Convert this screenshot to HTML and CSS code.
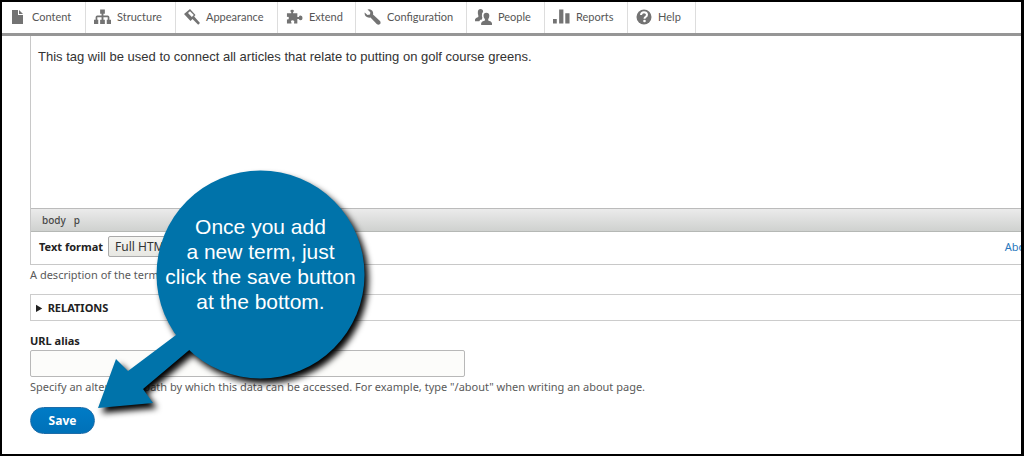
FILE: index.html
```
<!DOCTYPE html>
<html lang="en">
<head>
<meta charset="utf-8">
<title>Add term</title>
<link rel="stylesheet" href="styles.css">
</head>
<body>
<div class="page">
  <nav class="toolbar">
    <a class="tab tab-content" href="#"><svg class="icon" viewBox="0 0 16 16"><path d="M2 1h6v5h5v9H2zM9 1l4 4H9z"/></svg>Content</a>
    <a class="tab tab-structure" href="#"><svg class="icon icon-wide" viewBox="0 0 18 16"><path d="M6.500 0h5v4.500H10v2h4.500q1.800 0 1.800 1.800V11H18v4.500h-4.500V11h1V8.300H10V11h1.500v4.500h-5V11H8V8.300H3.500V11h1v4.500H0V11h1.700V8.300q0-1.800 1.800-1.800H8v-2H6.500z"/></svg>Structure</a>
    <a class="tab tab-appearance" href="#"><svg class="icon" viewBox="0 0 16 16"><path fill-rule="evenodd" d="M0 5 6 0l5.500 6-1.300 1.600 5.800 6.400-1.800 1.800L8.500 10 6.500 12zM6 2.200 4 4l3.800 4 2-2z"/></svg>Appearance</a>
    <a class="tab tab-extend" href="#"><svg class="icon icon-wide" viewBox="0 0 18 16"><path d="M1 4h4.500V3Q4 2 5 .7q1.500-1 3 0Q9 2 7.500 3v1H12v4h1.500q.5-1.500 2-1.500 2 .2 2 2.500t-2 2.500q-1.500 0-2-1.500H12v5H8.500v-1q1-1.500-.5-2.300-1.500-.7-2.500.3-.7.800.3 2v1H1v-4.500q2 .5 2-1.500T1 8z"/></svg>Extend</a>
    <a class="tab tab-config" href="#"><svg class="icon icon-wide" viewBox="0 0 17 16"><path d="M3.500.6q3-1 4.800 1.200Q9.500 3.500 9 5.500l7 6.500q1.300 2-.3 3.300-1.500 1-3-.4L6.500 8.500Q3.800 9 2 7.500.3 6 .7 3.500L3.500 6 6 5.500 6.300 3.200z"/></svg>Configuration</a>
    <a class="tab tab-people" href="#"><svg class="icon icon-wide" viewBox="0 0 18 17"><path d="M5.800 0q2.800 0 2.800 3Q7 4.500 7.300 7.500L7.800 9.500 7 11.500H5.500L4.500 13H0v-2q.5-1.500 3.500-2.500V7Q2.800 5 3 3q.3-3 2.800-3z"/><path d="M12 4q3.200 0 3.200 3.300 0 2-1.200 3.500v1.500q3.500.7 4 2.700v2H6.500v-2q.5-2 4-2.700v-1.500Q9 9.300 9 7.300 9 4 12 4z"/></svg>People</a>
    <a class="tab tab-reports" href="#"><svg class="icon icon-wide" viewBox="0 0 18 16"><path d="M0 10h4v5H0zM6.500 0h4.500v15H6.500zM13 4h4.500v11H13z"/></svg>Reports</a>
    <a class="tab tab-help" href="#"><svg class="icon" viewBox="0 0 16 16"><circle cx="8" cy="8" r="7.500"/><path class="icon-cut" d="M5 6q.3-2.700 3-2.700T11 5.700Q11 7 9.600 7.900 8.500 8.500 8.500 9.800"/><circle class="icon-dot" cx="8.500" cy="12" r="1.300"/></svg>Help</a>
  </nav>
  <main class="content">
    <form class="term-form">
      <section class="editor">
        <div class="editor-body"><p>This tag will be used to connect all articles that relate to putting on golf course greens.</p></div>
        <div class="editor-path"><span>body</span><span>p</span></div>
        <div class="format-row">
          <label class="format-label" for="format">Text format</label>
          <select class="format-select" id="format"><option>Full HTML</option></select>
          <a class="format-help" href="#">About text formats</a>
        </div>
      </section>
      <p class="hint">A description of the term.</p>
      <details class="relations"><summary>RELATIONS</summary></details>
      <label class="alias-label" for="alias">URL alias</label>
      <input class="alias-input" id="alias" type="text">
      <p class="hint">Specify an alternative path by which this data can be accessed. For example, type "/about" when writing an about page.</p>
      <button class="save" type="button">Save</button>
    </form>
  </main>
  <aside class="callout">
    <svg class="callout-shape" viewBox="0 0 290 260"><g><circle cx="170.500" cy="114.500" r="104"/><path d="M8 248 26 199 38 211 90 172 104 186 53 229 63 243z"/></g></svg>
    <p class="callout-text">Once you add<br>a new term, just<br>click the save button<br>at the bottom.</p>
  </aside>
</div>
</body>
</html>
```
FILE: styles.css
```
* { box-sizing: border-box; }
body { margin: 0; font-family: "Noto Sans", "Open Sans", sans-serif; color: #222; background: #fff; }
p { margin: 0; }
.page { position: relative; min-height: 100vh; border: 2px solid #000; border-right-width: 3px; overflow: hidden; background: #fff; }

.toolbar { display: flex; height: 34px; border-bottom: 3px solid #969696; }
.tab { display: flex; align-items: center; gap: 6px; padding: 0 0 1px 8px; border-right: 1px solid #ddd; color: #565656; font: 11px/16px Lato, "Noto Sans", sans-serif; text-decoration: none; white-space: nowrap; }
.tab-content { width: 84px; }
.tab-structure { width: 90px; }
.tab-appearance { width: 102px; }
.tab-extend { width: 78px; }
.tab-config { width: 111px; }
.tab-people { width: 78px; }
.tab-reports { width: 83px; }
.tab-help { width: 68px; }
.icon { flex: none; width: 16px; height: 16px; fill: #737373; }
.icon-wide { width: 17px; }
.icon-cut { fill: none; stroke: #fff; stroke-width: 2; }
.icon-dot { fill: #fff; }

.content { padding-left: 28px; }
.term-form { display: flex; flex-direction: column; align-items: flex-start; }
.editor { align-self: stretch; margin-right: -90px; border: 1px solid #c8c8c8; border-top: 0; }
.editor-body { height: 172px; padding: 12px 8px 12px 7px; font: 13px/18px "Liberation Sans", Arial, sans-serif; color: #333; }
.editor-path { display: flex; gap: 8px; height: 24px; padding: 0 11px; border-top: 1px solid #bbb; border-bottom: 1px solid #b5b8b5; background: linear-gradient(#ebebeb, #cfd1cf); color: #484848; font-size: 10px; line-height: 22px; font-weight: 500; }
.format-row { display: flex; align-items: center; gap: 5px; height: 32px; padding: 0 8px 3px; font-size: 12px; }
.format-label { font-size: 11px; font-weight: 700; }
.format-select { width: 110px; height: 21px; padding: 0 2px; border: 1px solid #aaa; border-radius: 2px; background: linear-gradient(#f5f5f2, #e7e7e2); color: #333; font: 12px/18px "Noto Sans", sans-serif; }
.format-help { margin-left: auto; color: #2878bd; font-size: 11px; text-decoration: none; }
.hint { color: #5a5a5a; font-size: 11px; line-height: 20px; white-space: nowrap; }
.relations { align-self: stretch; margin: 9px -20px 11px 0; border: 1px solid #ccc; }
.relations summary { padding: 0 5px; font-size: 11px; line-height: 25px; font-weight: 700; }
.alias-label { font-size: 11px; line-height: 18px; font-weight: 700; }
.alias-input { width: 435px; height: 27px; padding: 0 8px; border: 1px solid #b8b8b8; border-radius: 2px; background: #fcfcfa; font: inherit; }
.save { width: 65px; height: 27px; margin-top: 10px; padding: 0; border: 1px solid #1e6ca8; border-radius: 14px; background: linear-gradient(#007bc6, #0071b8); color: #fff; font: 700 12px/20px "Noto Sans", sans-serif; }

.callout { position: absolute; left: 88px; top: 158px; width: 290px; height: 260px; }
.callout-shape { display: block; width: 290px; height: 260px; fill: #0073aa; filter: drop-shadow(4px 5px 3px #000); }
.callout-text { position: absolute; left: 67px; top: 54px; width: 207px; text-align: center; color: #fff; font: 21px/25px "Liberation Sans", Arial, sans-serif; }
```
